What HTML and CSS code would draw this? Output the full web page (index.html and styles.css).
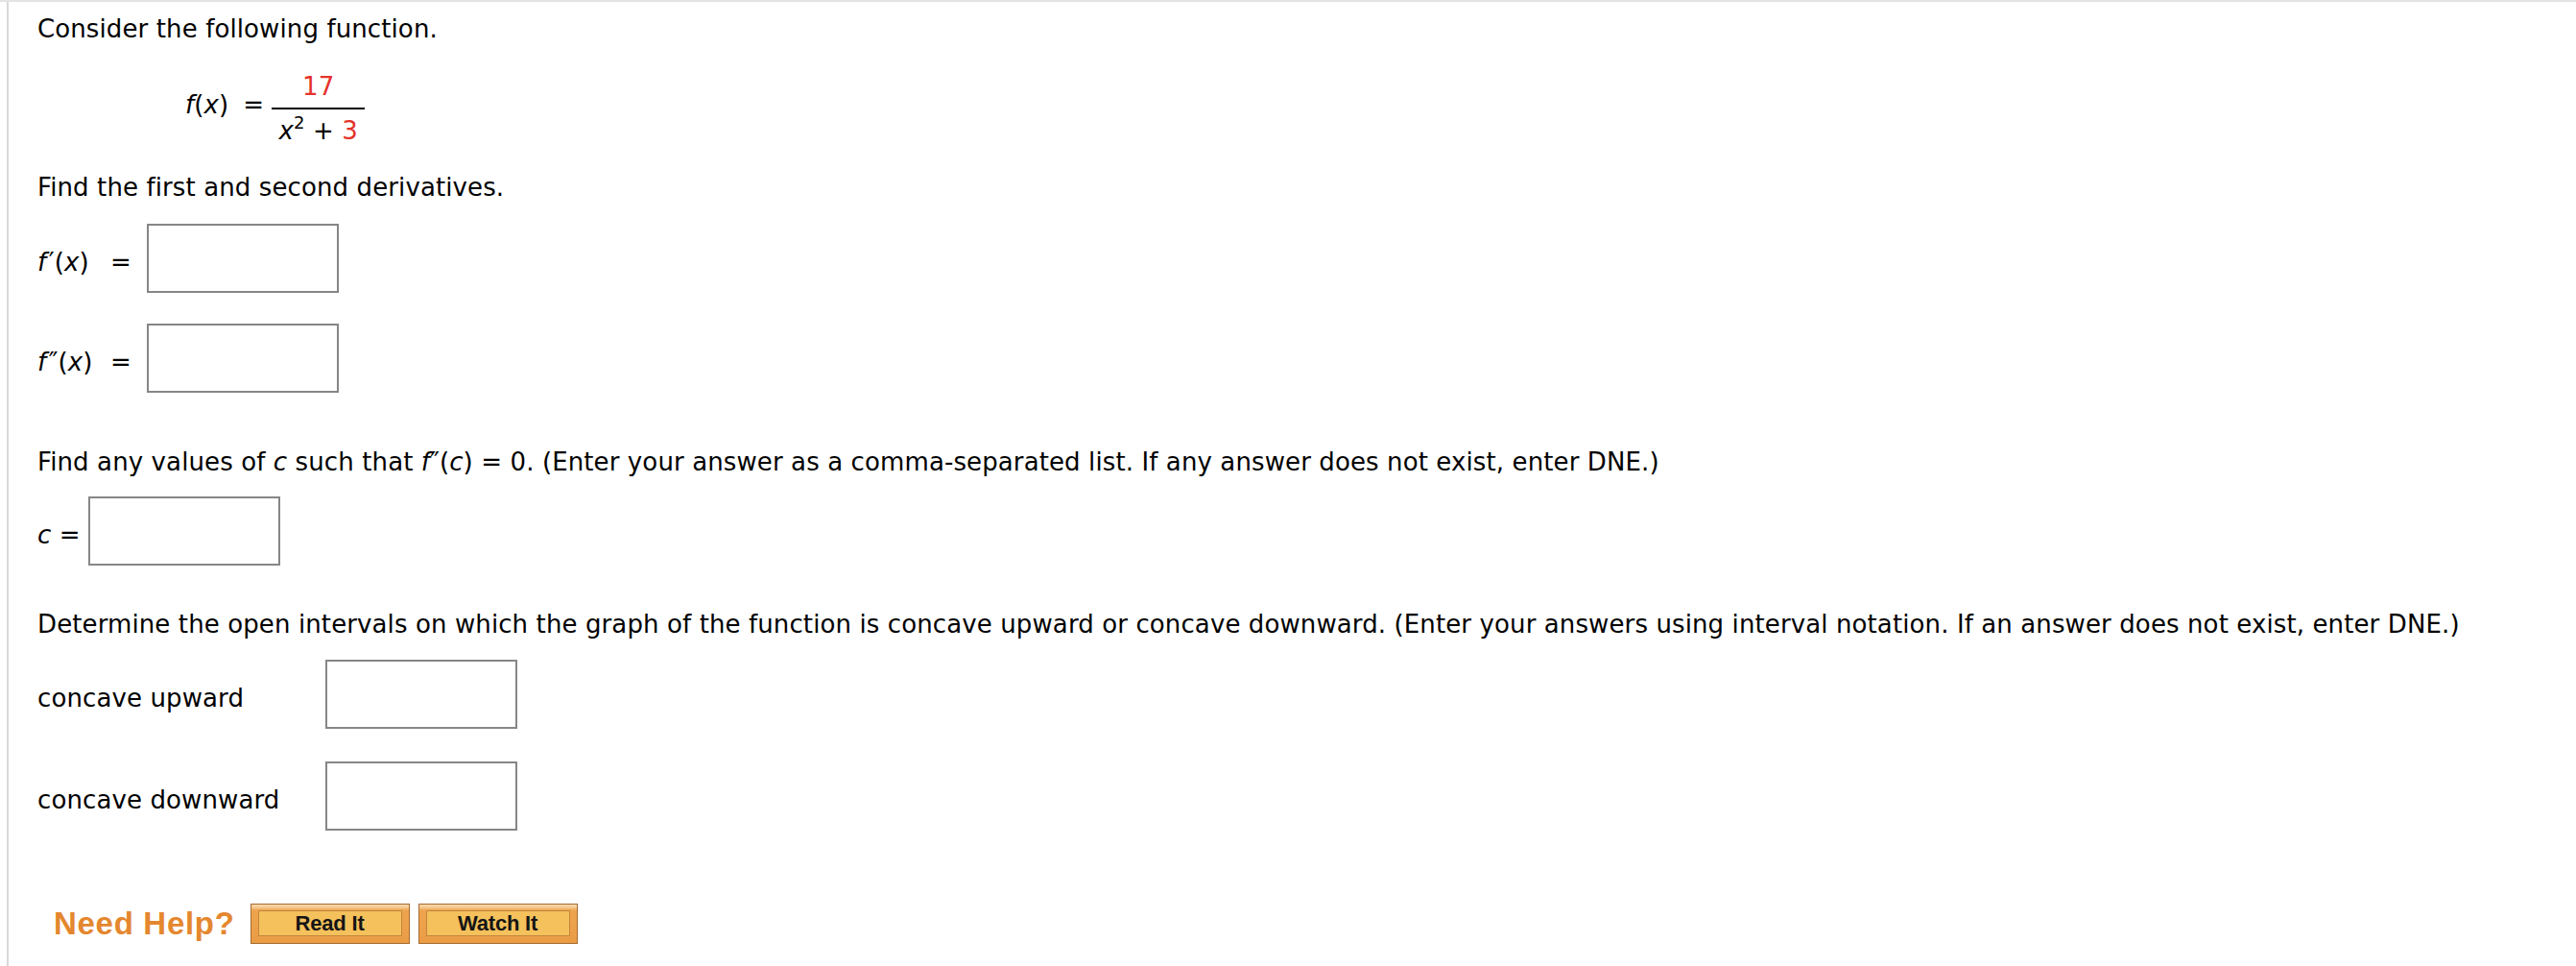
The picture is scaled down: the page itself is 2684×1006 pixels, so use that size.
FILE: index.html
```html
<!DOCTYPE html>
<html lang="en">
<head>
<meta charset="utf-8">
<title>Question</title>
<link rel="stylesheet" href="styles.css">
</head>
<body>
<div class="page">
  <div class="panel">
    <p class="text first">Consider the following function.</p>

    <div class="equation">
      <span class="fx"><i>f</i>(<i>x</i>)</span>
      <span class="eqsign">=</span>
      <span class="frac">
        <span class="num red">17</span>
        <span class="den"><i>x</i><sup>2</sup> + <span class="red">3</span></span>
      </span>
    </div>

    <p class="text find1">Find the first and second derivatives.</p>

    <div class="row row-d1">
      <span class="lbl"><i>f</i> ′(<i>x</i>)</span>
      <span class="lbl-eq">=</span>
      <input class="ans" type="text" aria-label="f prime of x">
    </div>

    <div class="row row-d2">
      <span class="lbl"><i>f</i> ″(<i>x</i>)</span>
      <span class="lbl-eq">=</span>
      <input class="ans" type="text" aria-label="f double prime of x">
    </div>

    <p class="text find2">Find any values of <i>c</i> such that <i>f</i>″(<i>c</i>) = 0. (Enter your answer as a comma-separated list. If any answer does not exist, enter DNE.)</p>

    <div class="row row-c">
      <span class="lbl-c"><i>c</i> =</span>
      <input class="ans" type="text" aria-label="c">
    </div>

    <p class="text find3">Determine the open intervals on which the graph of the function is concave upward or concave downward. (Enter your answers using interval notation. If an answer does not exist, enter DNE.)</p>

    <div class="row row-up">
      <span class="lbl-wide">concave upward</span>
      <input class="ans" type="text" aria-label="concave upward">
    </div>

    <div class="row row-down">
      <span class="lbl-wide">concave downward</span>
      <input class="ans" type="text" aria-label="concave downward">
    </div>

    <div class="help">
      <span class="help-title">Need Help?</span>
      <button class="btn" type="button"><span class="btn-inner">Read It</span></button>
      <button class="btn" type="button"><span class="btn-inner">Watch It</span></button>
    </div>
  </div>
</div>
</body>
</html>
```

FILE: styles.css
```css
html, body {
  margin: 0;
  padding: 0;
  background: #ffffff;
}

body {
  font-family: "DejaVu Sans", Verdana, sans-serif;
  font-size: 26px;
  line-height: 30px;
  letter-spacing: 0.11px;
  color: #000000;
}

.page {
  border-top: 2px solid #e3e3e3;
  min-height: 1004px;
}

.panel {
  margin-left: 7px;
  border-left: 2px solid #d8d8d8;
  padding-left: 30px;
  min-height: 1004px;
  box-sizing: border-box;
  padding-top: 13px;
}

.text {
  margin: 0;
  white-space: nowrap;
}

.red {
  color: #e5332a;
}

i {
  font-style: italic;
}

/* equation */
.equation {
  display: flex;
  align-items: center;
  padding-left: 154px;
  margin-top: 30px;
}

.fx {
  padding-bottom: 8px;
  margin-right: 15px;
}

.eqsign {
  padding-bottom: 8px;
  margin-right: 8px;
}

.frac {
  display: inline-flex;
  flex-direction: column;
  align-items: center;
  width: 97px;
}

.num {
  display: block;
  padding-bottom: 7px;
  border-bottom: 2px solid #000;
  width: 100%;
  text-align: center;
}

.den {
  display: block;
  padding-top: 7px;
  text-align: center;
}

.den sup {
  font-size: 18px;
  line-height: 0;
  vertical-align: 11px;
}

.find1 {
  margin-top: 29px;
}

/* answer rows */
.row {
  display: flex;
  align-items: center;
}

.row-d1 { margin-top: 23px; }
.row-d2 { margin-top: 32px; }
.find2 { margin-top: 57px; }
.row-c { margin-top: 21px; }
.find3 { margin-top: 46px; }
.row-up { margin-top: 22px; }
.row-down { margin-top: 34px; }

.lbl,
.lbl-eq,
.lbl-c,
.lbl-wide {
  padding-top: 8px;
  white-space: nowrap;
}

.lbl {
  width: 76px;
  word-spacing: -6px;
}

.lbl-eq {
  width: 22px;
  margin-right: 16px;
}

.lbl-c {
  margin-right: 8px;
}

.lbl-wide {
  width: 300px;
}

.ans {
  width: 200px;
  height: 72px;
  box-sizing: border-box;
  border: 2px solid #868686;
  border-radius: 0;
  padding: 0 6px;
  margin: 0;
  background: #ffffff;
  font: inherit;
  outline: none;
}

/* help bar */
.help {
  display: flex;
  align-items: center;
  margin-top: 76px;
  padding-left: 17px;
}

.help-title {
  font-family: "Liberation Sans", Arial, sans-serif;
  font-weight: bold;
  font-size: 33px;
  line-height: 42px;
  color: #e4872e;
  letter-spacing: 0.7px;
  margin-right: 16px;
}

.btn {
  width: 166px;
  height: 42px;
  box-sizing: border-box;
  margin: 0 9px 0 0;
  padding: 6px 7px 7px 7px;
  border: 1px solid #a46c30;
  background: linear-gradient(to bottom, #f8d9ad 0, #f6c890 3px, #eda44e 6px, #eb9c45 100%);
  cursor: pointer;
  display: flex;
}

.btn-inner {
  flex: 1;
  display: flex;
  align-items: center;
  justify-content: center;
  border: 1px solid #c4853c;
  background: #f4c15c;
  font-family: "Liberation Sans", Arial, sans-serif;
  font-weight: bold;
  font-size: 22px;
  color: #151515;
  letter-spacing: -0.2px;
}
```
